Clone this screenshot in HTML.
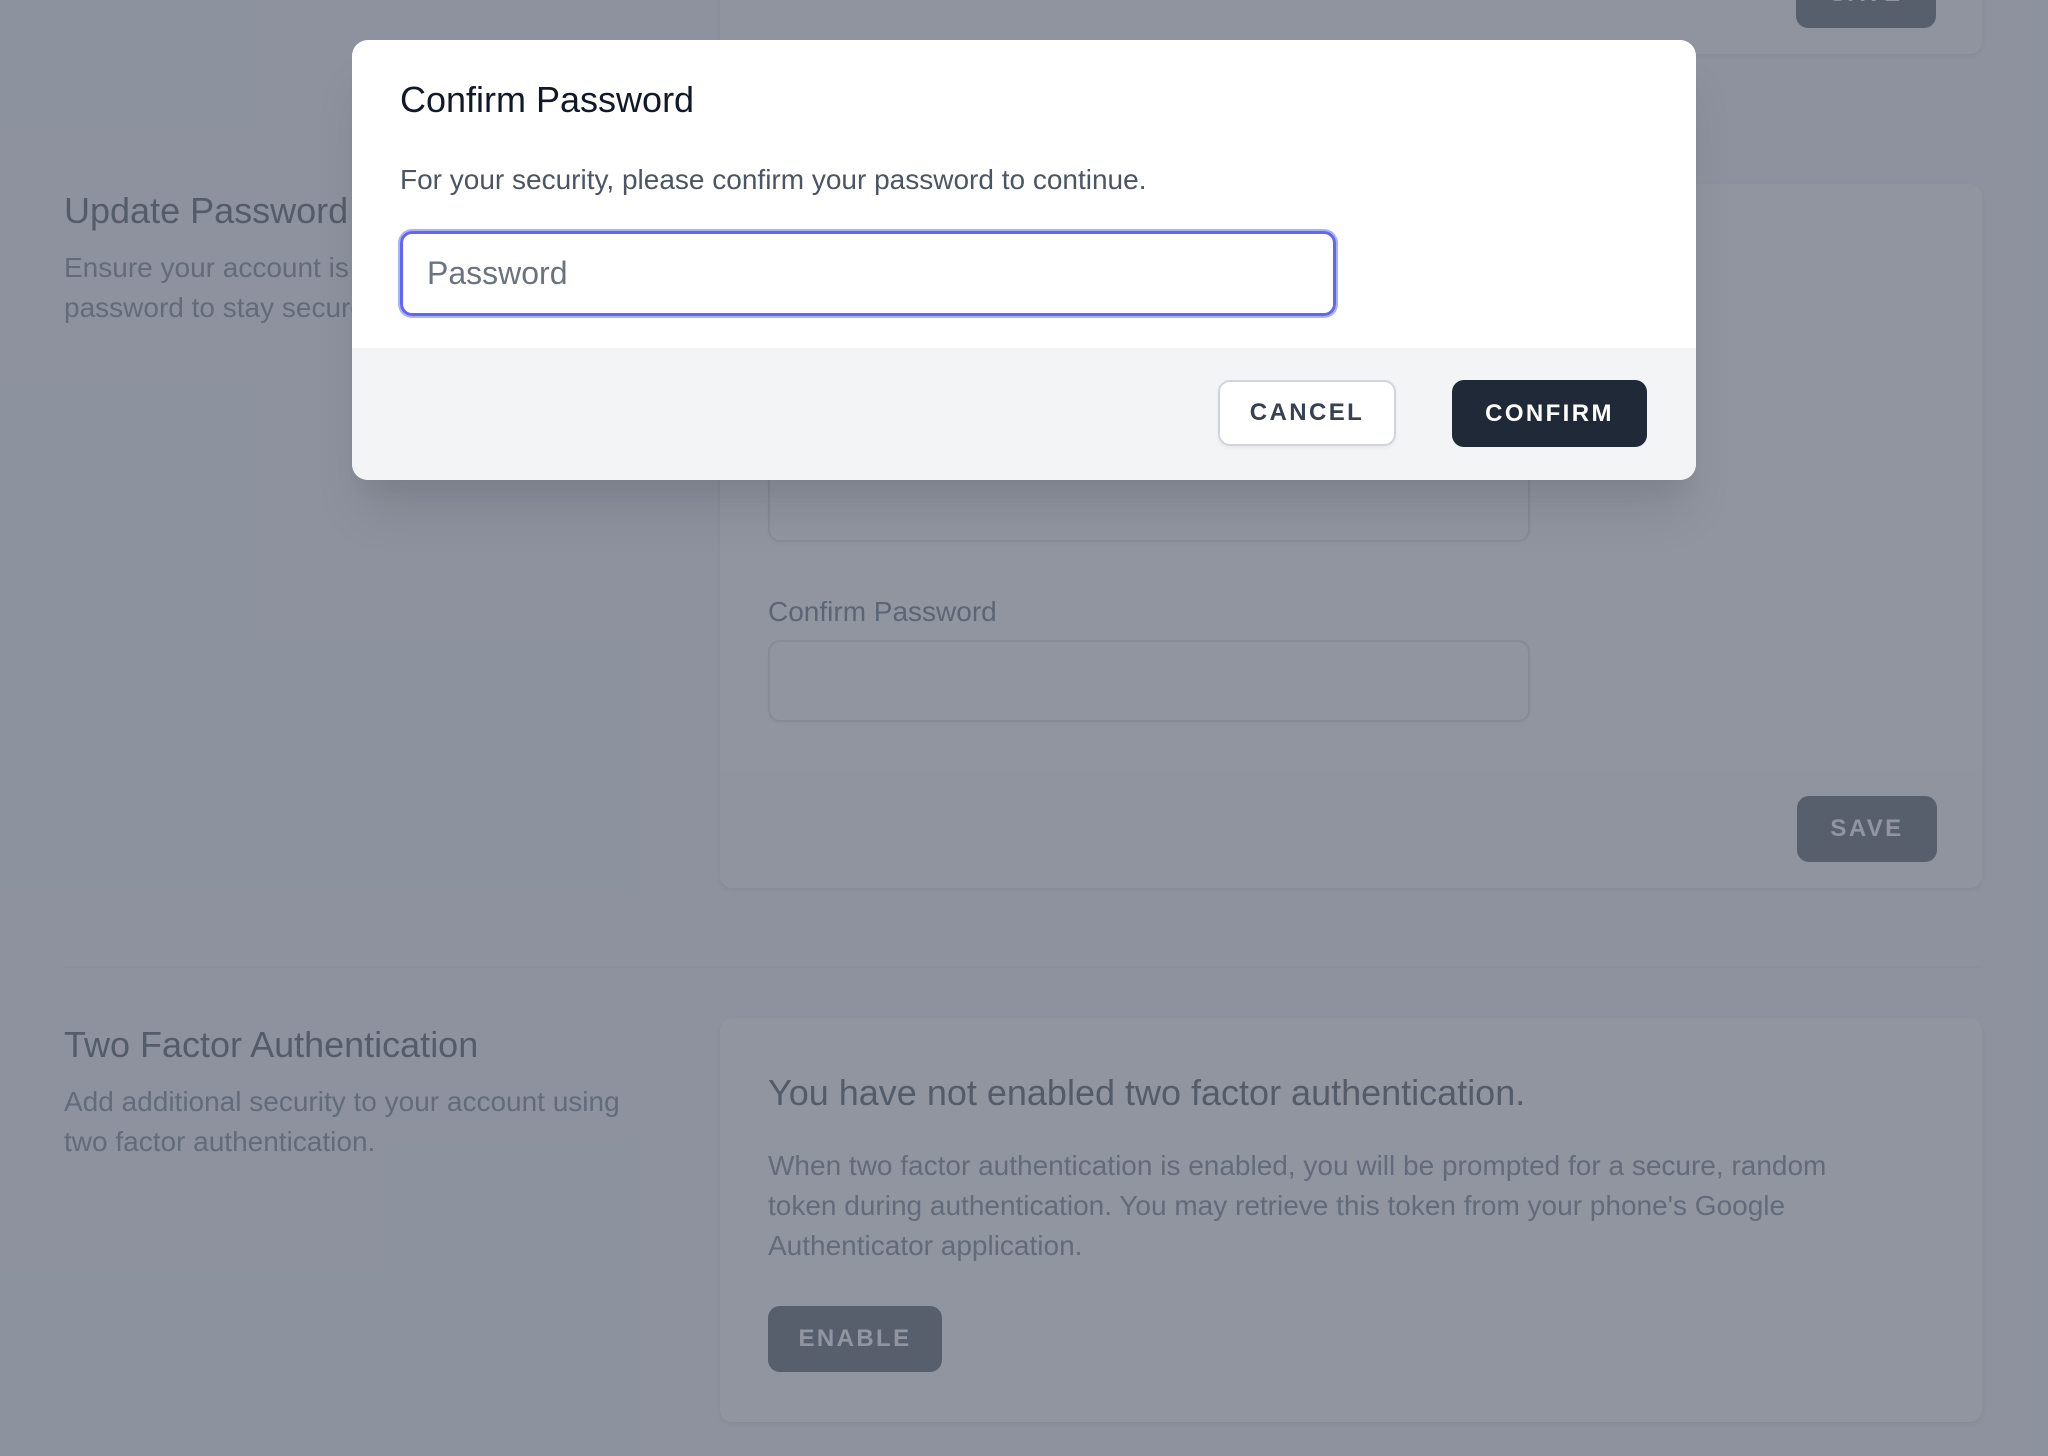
<!DOCTYPE html>
<html><head><meta charset="utf-8">
<style>
html{zoom:2}
*{box-sizing:border-box;margin:0;padding:0}
body{width:1024px;height:727.5px;overflow:hidden;background:#f3f4f6;font-family:"Liberation Sans",sans-serif;position:relative;color:#111827}
.abs{position:absolute}
.card{background:#fff;border-radius:6px;box-shadow:0 1px 3px rgba(0,0,0,.1),0 1px 2px rgba(0,0,0,.06)}
.h{font-size:18px;font-weight:500;color:#111827}
.d{font-size:14px;color:#4b5563;line-height:20px}
.btn{background:#1f2937;color:#fff;border-radius:6px;font-size:12px;font-weight:600;letter-spacing:.1em;text-transform:uppercase;display:flex;align-items:center;justify-content:center}
.inp{border:1px solid #d1d5db;border-radius:6px;background:#fff;box-shadow:0 1px 2px rgba(0,0,0,.05)}
.line{height:1px;background:#e5e7eb}
</style></head><body>
<div class="abs card" style="left:360px;top:-20px;width:631px;height:47px;border-radius:0 0 6px 6px;overflow:hidden">
  <div style="position:absolute;left:0;right:0;bottom:0;height:40px;background:#f9fafb"></div>
</div>
<div class="abs btn" style="left:898px;top:-20px;width:70px;height:34px">SAVE</div>

<div class="abs h" style="left:32px;top:95px">Update Password</div>
<div class="abs d" style="left:32px;top:124px;width:300px">Ensure your account is using a long, random password to stay secure.</div>
<div class="abs card" style="left:360px;top:92px;width:631px;height:352px;overflow:hidden">
  <div style="position:absolute;left:0;right:0;bottom:0;height:59px;background:#f9fafb"></div>
</div>
<div class="abs inp" style="left:384px;top:230px;width:381px;height:41px"></div>
<div class="abs" style="left:384px;top:298px;font-size:14px;color:#374151;font-weight:500">Confirm Password</div>
<div class="abs inp" style="left:384px;top:320px;width:381px;height:41px"></div>
<div class="abs btn" style="left:898.5px;top:398px;width:70px;height:33px">SAVE</div>
<div class="abs line" style="left:32px;top:483px;width:959px"></div>

<div class="abs h" style="left:32px;top:512px">Two Factor Authentication</div>
<div class="abs d" style="left:32px;top:541px;width:300px">Add additional security to your account using two factor authentication.</div>
<div class="abs card" style="left:360px;top:509px;width:631px;height:202px"></div>
<div class="abs h" style="left:384px;top:536px">You have not enabled two factor authentication.</div>
<div class="abs d" style="left:384px;top:573px;width:542px">When two factor authentication is enabled, you will be prompted for a secure, random token during authentication. You may retrieve this token from your phone's Google Authenticator application.</div>
<div class="abs btn" style="left:384px;top:653px;width:87px;height:33px">ENABLE</div>

<div class="abs" style="left:0;top:0;width:1024px;height:728px;background:rgba(107,114,128,.75)"></div>

<div class="abs" style="left:176px;top:20px;width:672px;height:220px;background:#fff;border-radius:8px;overflow:hidden;box-shadow:0 20px 25px -5px rgba(0,0,0,.1),0 10px 10px -5px rgba(0,0,0,.04)">
  <div class="abs h" style="left:24px;top:16px;line-height:28px">Confirm Password</div>
  <div class="abs" style="left:24px;top:60px;font-size:14px;line-height:20px;color:#4b5563">For your security, please confirm your password to continue.</div>
  <div class="abs" style="left:24px;top:95.5px;width:468px;height:42.5px;border:1.5px solid #6366f1;border-radius:6px;box-shadow:0 0 0 1px #a5b4fc;display:flex;align-items:center;padding-left:12px;font-size:16px;color:#6b7280">Password</div>
  <div class="abs" style="left:0;top:154px;width:672px;height:66px;background:#f3f4f6"></div>
  <div class="abs" style="left:433px;top:170px;width:89px;height:33px;background:#fff;border:1px solid #d1d5db;border-radius:6px;box-shadow:0 1px 2px rgba(0,0,0,.05);font-size:12px;font-weight:600;letter-spacing:.1em;color:#374151;display:flex;align-items:center;justify-content:center">CANCEL</div>
  <div class="abs btn" style="left:550px;top:170px;width:97.5px;height:33.5px">CONFIRM</div>
</div>
</body></html>
